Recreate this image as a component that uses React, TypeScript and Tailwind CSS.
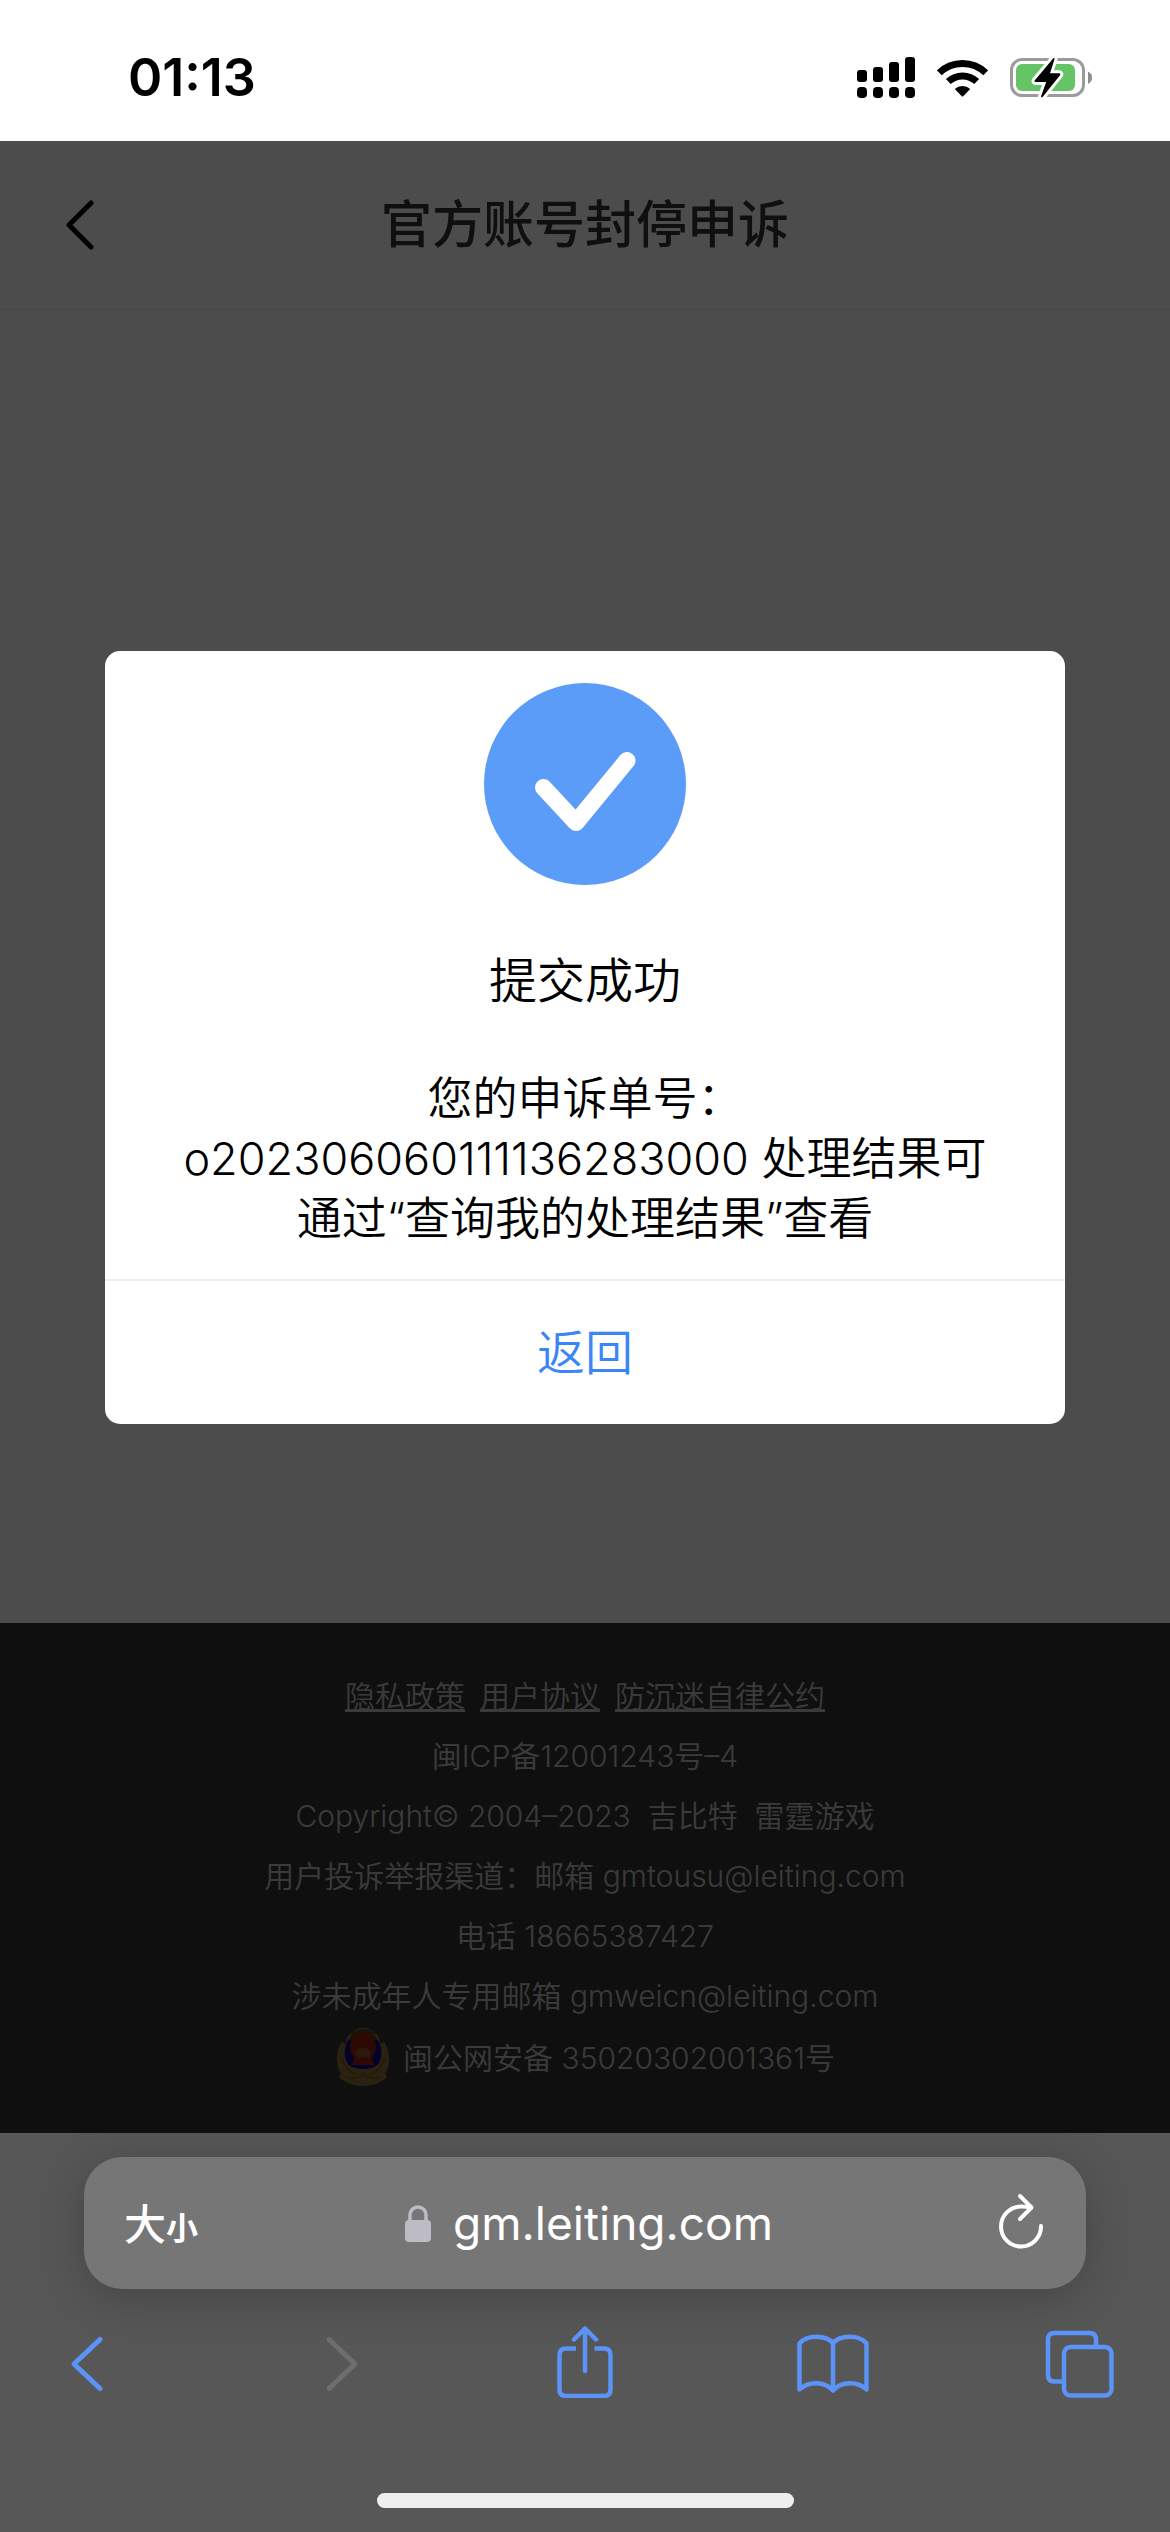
import React, { useState } from "react";

const policyLinks: { label: string; href: string }[] = [
  { label: "隐私政策", href: "#privacy" },
  { label: "用户协议", href: "#agreement" },
  { label: "防沉迷自律公约", href: "#anti-addiction" },
];

function StatusBar() {
  return (
    <div className="flex h-[141px] items-center justify-between bg-white pt-[14px] pl-[128px] pr-[78px] text-black">
      <span className="text-[52px] leading-[52px] font-semibold">01:13</span>
      <div className="flex items-center gap-[22px]">
        <svg width="58" height="41" viewBox="0 0 58 41" aria-hidden="true">
          <rect x="0" y="13" width="10" height="12" rx="3" />
          <rect x="16" y="10" width="10" height="15" rx="3" />
          <rect x="32" y="5" width="10" height="20" rx="3" />
          <rect x="48" y="0" width="10" height="25" rx="3" />
          <rect x="0" y="30" width="10" height="11" rx="4" />
          <rect x="16" y="30" width="10" height="11" rx="4" />
          <rect x="32" y="30" width="10" height="11" rx="4" />
          <rect x="48" y="30" width="10" height="11" rx="4" />
        </svg>
        <svg width="51" height="38" viewBox="0 0 51 38" aria-hidden="true">
          <g fill="none" stroke="#000" strokeWidth="7">
            <path d="M2.3 13.8a33.5 33.5 0 0 1 46.4 0" />
            <path d="M11.3 22.6a20.5 20.5 0 0 1 28.4 0" />
          </g>
          <path d="M17.8 30a11.4 11.4 0 0 1 15.4 0l-7 7.2q-.7.6-1.4 0z" />
        </svg>
        <svg width="82" height="41" viewBox="0 0 82 41" aria-hidden="true">
          <rect x="1.5" y="2.5" width="72" height="36" rx="10.5" fill="#fff" stroke="#9b9b9b" strokeWidth="3" />
          <path d="M78 14.5c5.5 2.5 5.5 10 0 12.5z" fill="#8e8e8e" />
          <rect x="6" y="7" width="59" height="27" rx="6" fill="#65c466" />
          <path
            d="M43.3 1.2 24.7 23.5Q24 25 25.7 25h10.5L31 39.6q.5 1.6 2-.1L50.2 18q.6-1.8-1-1.8H40L44.6 2z"
            stroke="#fff"
            strokeWidth="6"
            strokeLinejoin="round"
          />
          <path d="M43.3 1.2 24.7 23.5Q24 25 25.7 25h10.5L31 39.6q.5 1.6 2-.1L50.2 18q.6-1.8-1-1.8H40L44.6 2q-.2-1.5-1.3-.8z" />
        </svg>
      </div>
    </div>
  );
}

function PoliceBadge() {
  return (
    <svg width="56" height="60" viewBox="0 0 56 60" aria-hidden="true">
      <path
        d="M28 0c5 0 9 2 11 5 5 2 6 6 6 11l4-2c4 5 6 13 5 20-1 5-1 8-4 11l2 4c-5 5-14 9-24 9S9 54 4 49l2-4c-3-3-3-6-4-11-1-7 1-15 5-20l4 2c0-5 1-9 6-11 2-3 6-5 11-5z"
        fill="#8f7038"
      />
      <path d="M14 11C8 18 8 33 15 38q5 3 13 3t13-3c7-5 7-20 1-27z" fill="#0a0a8a" />
      <path d="M18 4q10-6 20 0l4 8H14z" fill="#4a4034" />
      <path d="M28 4c9 0 13 7 13 15 0 6-4 9-4 13l3 5H16l3-5c0-4-4-7-4-13 0-8 4-15 13-15z" fill="#96200f" />
      <path d="M20 24q8-8 16 0l-2 7q-6-4-12 0z" fill="#985030" />
      <path d="M6 30q6 13 14 16M50 30q-6 13-14 16M10 49q12 4 18-4 6 8 18 4" fill="none" stroke="#785a2a" strokeWidth="2" />
    </svg>
  );
}

function BrowserBar() {
  return (
    <div className="bg-[#575757] pt-6 pb-6">
      <div className="mx-[84px] flex h-[132px] items-center rounded-[38px] bg-[#767676] px-10 text-white shadow-[0_8px_48px_rgba(0,0,0,0.22)]">
        <button className="flex w-20 items-baseline pt-2" aria-label="大小">
          <span className="text-[42px] leading-[48px] font-medium">大</span>
          <span className="text-[32px] leading-[48px] font-bold">小</span>
        </button>
        <button className="flex flex-1 items-center justify-center gap-[22px] pl-2">
          <svg width="26" height="37" viewBox="0 0 26 37" aria-hidden="true">
            <rect x="0" y="15" width="26" height="22" rx="4" fill="#bdbcc4" />
            <path d="M5 17V10a8 8 0 0 1 16 0v7" fill="none" stroke="#bdbcc4" strokeWidth="3.5" />
          </svg>
          <span className="text-[46px] leading-[60px]">gm.leiting.com</span>
        </button>
        <button className="flex w-20 justify-end pb-1" aria-label="刷新">
          <svg width="48" height="56" viewBox="0 0 48 56" fill="none" stroke="#fff" strokeWidth="4" strokeLinecap="round" strokeLinejoin="round" aria-hidden="true">
            <path d="M43 33A20 20 0 1 1 23 13.5q5 0 10 1" />
            <path d="M22 3 33.5 14.5 22 26" />
          </svg>
        </button>
      </div>

      <nav className="mt-[37px] flex justify-between px-[46px] text-[#5b93f8]">
        <button aria-label="后退">
          <svg width="80" height="72" viewBox="0 0 80 72" fill="none" stroke="currentColor" strokeWidth="5" strokeLinecap="round" strokeLinejoin="round">
            <path d="M54 13.5 28 38 54 62.5" />
          </svg>
        </button>
        <button aria-label="前进" disabled className="text-[#6e6e6e]">
          <svg width="80" height="72" viewBox="0 0 80 72" fill="none" stroke="currentColor" strokeWidth="5" strokeLinecap="round" strokeLinejoin="round">
            <path d="M33 13.5 59 38 33 62.5" />
          </svg>
        </button>
        <button aria-label="分享">
          <svg width="80" height="72" viewBox="0 0 80 72" fill="none" stroke="currentColor" strokeWidth="4.5" strokeLinejoin="round">
            <path d="M31 22.5H21q-6.5 0-6.5 6.5v34.5q0 6.5 6.5 6.5h38q6.5 0 6.5-6.5V29q0-6.5-6.5-6.5H49.5" />
            <path d="M40 45V3M29 13.5 40 2.5l11 11" strokeLinecap="round" />
          </svg>
        </button>
        <button aria-label="书签">
          <svg width="80" height="72" viewBox="0 0 80 72" fill="none" stroke="currentColor" strokeWidth="4.5" strokeLinecap="round" strokeLinejoin="round">
            <path d="M38 17C31 9 12 8 4.5 17.5V63.5C13 55 30 55 38 64.5C46 55 63 55 71.5 63.5V17.5C64 8 45 9 38 17zV64" />
          </svg>
        </button>
        <button aria-label="标签页">
          <svg width="80" height="72" viewBox="0 0 80 72" fill="none" stroke="currentColor" strokeWidth="4.5" strokeLinejoin="round">
            <rect x="20" y="21" width="47.5" height="48.5" rx="6.5" />
            <path d="M20 55.5H10.5Q4 55.5 4 49V13.5Q4 7 10.5 7H45.5Q52 7 52 13.5V21" />
          </svg>
        </button>
      </nav>

      <div className="mx-auto mt-[95px] h-[15px] w-[417px] rounded-full bg-[#eeeeee]" />
    </div>
  );
}

export default function App() {
  const [open, setOpen] = useState(true);

  return (
    <div className="flex min-h-screen flex-col bg-white font-['Inter','Noto_Sans_CJK_SC',sans-serif]">
      <StatusBar />

      <div className="relative flex flex-1 flex-col">
        {/* Header */}
        <header className="flex h-[170px] items-center border-b-2 border-[#f3f3f3] px-[60px]">
          <button className="w-12" aria-label="返回上一页">
            <svg width="40" height="50" viewBox="0 0 40 50" fill="none" stroke="#000" strokeWidth="5" strokeLinecap="round" strokeLinejoin="round">
              <path d="M31 3 9 25l22 22" />
            </svg>
          </button>
          <h1 className="flex-1 text-center text-[51px] leading-[72px] font-medium text-[#333333]">
            官方账号封停申诉
          </h1>
          <div className="w-12" />
        </header>

        <main className="flex-1" />

        {/* Footer */}
        <footer className="bg-[#333333] pt-[43px] pb-[45px] text-center text-[30px] leading-[60px] font-[350] text-[#c3c3c3]">
          <div className="flex justify-center gap-[15px]">
            {policyLinks.map((link) => (
              <a key={link.href} href={link.href} className="underline">
                {link.label}
              </a>
            ))}
          </div>
          <p>闽ICP备12001243号–4</p>
          <p>Copyright© 2004–2023&nbsp; 吉比特&nbsp; 雷霆游戏</p>
          <p>用户投诉举报渠道：邮箱 gmtousu@leiting.com</p>
          <p>电话 18665387427</p>
          <p>涉未成年人专用邮箱 gmweicn@leiting.com</p>
          <div className="mt-[2px] flex items-center justify-center gap-3">
            <PoliceBadge />
            <p>闽公网安备 35020302001361号</p>
          </div>
        </footer>

        {/* Result dialog */}
        {open && (
          <div className="absolute inset-0 flex items-center justify-center bg-black/70 pb-[199px]">
            <div role="dialog" aria-labelledby="result-title" className="w-[82%] rounded-[15px] bg-white text-center text-black">
              <div className="flex flex-col items-center px-[60px] pt-8 pb-[30px]">
                <svg width="202" height="202" viewBox="0 0 202 202" aria-hidden="true">
                  <circle cx="101" cy="101" r="101" fill="#5b9cf9" />
                  <path d="M59.5 104.5 92 139.5 143 77.5" fill="none" stroke="#fff" strokeWidth="17" strokeLinecap="round" strokeLinejoin="round" />
                </svg>
                <h2 id="result-title" className="mt-[62px] text-[48px] leading-[68px] font-[350]">
                  提交成功
                </h2>
                <p className="mt-[54px] text-[45px] leading-[60px] font-[350]">
                  您的申诉单号：
                  <br />
                  o202306060111136283000 处理结果可
                  <br />
                  通过“查询我的处理结果”查看
                </p>
              </div>
              <button
                onClick={() => setOpen(false)}
                className="h-[145px] w-full border-t-2 border-[#ebebf3] text-[48px] leading-[68px] font-[350] text-[#3b86f7]"
              >
                返回
              </button>
            </div>
          </div>
        )}
      </div>

      <BrowserBar />
    </div>
  );
}
